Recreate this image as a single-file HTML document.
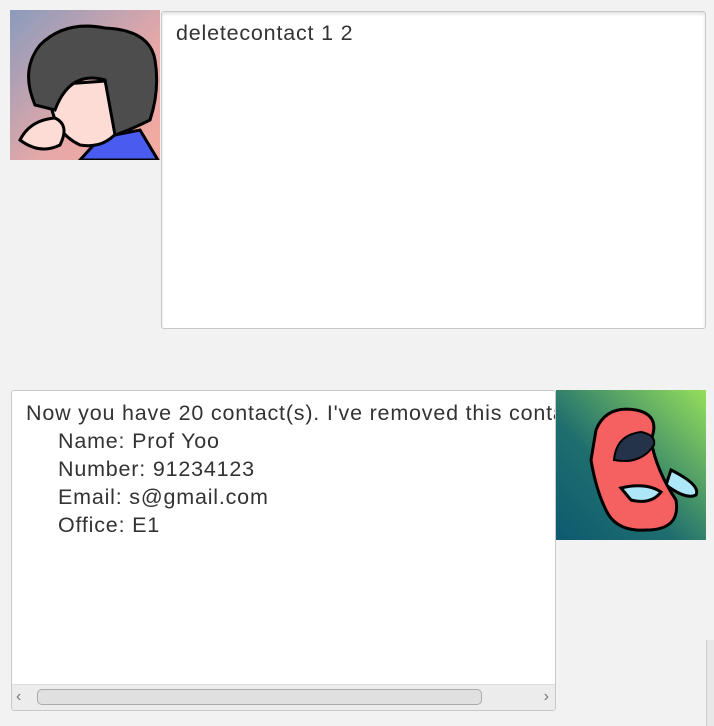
<!DOCTYPE html>
<html><head><style>
body{margin:0;width:714px;height:726px;background:#f2f2f2;position:relative;overflow:hidden;font-family:"Liberation Sans",sans-serif;color:#333;}
.box{position:absolute;background:#fff;border:1px solid #c8c8c8;border-radius:3px;box-sizing:border-box;}
.t{position:absolute;font-size:21.5px;letter-spacing:0.8px;white-space:pre;line-height:28px;}
.i{padding-left:32px}
</style></head><body>
<svg style="position:absolute;left:10px;top:10px" width="150" height="150" viewBox="0 0 150 150">
<defs><linearGradient id="g1" x1="0" y1="0" x2="1" y2="1"><stop offset="0" stop-color="#8a9bbd"/><stop offset="0.6" stop-color="#e6a8a8"/><stop offset="1" stop-color="#f4aaa0"/></linearGradient></defs>
<rect width="150" height="150" fill="url(#g1)"/>
<path d="M70 150 L90 128 L130 120 L148 150Z" fill="#4a5cf0" stroke="#000" stroke-width="3"/>
<path d="M40 75 Q38 120 70 135 Q100 140 115 110 L110 70Z" fill="#fcdcd4" stroke="#000" stroke-width="3"/>
<path d="M25 95 Q10 60 30 35 Q55 10 95 18 Q140 20 145 50 Q150 80 140 110 Q120 120 105 125 L95 70 Q60 60 45 100 Z" fill="#4d4d4d" stroke="#000" stroke-width="3"/>
<path d="M10 130 Q20 110 45 108 Q60 115 50 135 Q30 145 10 130Z" fill="#fcdcd4" stroke="#000" stroke-width="3"/>
</svg>
<div class="box" style="left:161px;top:11px;width:545px;height:318px;box-shadow:inset 0 2px 3px rgba(0,0,0,.12)"></div>
<div class="t" style="left:176px;top:19px">deletecontact 1 2</div>
<div class="box" style="left:11px;top:390px;width:545px;height:321px;overflow:hidden">
<div class="t" style="left:14px;top:8px"><div>Now you have 20 contact(s). I've removed this contact:</div><div class="i">Name: Prof Yoo</div><div class="i">Number: 91234123</div><div class="i">Email: s@gmail.com</div><div class="i">Office: E1</div></div>
<div style="position:absolute;left:0;right:0;bottom:0;height:25px;background:#ececec;border-top:1px solid #ddd"></div>
<div style="position:absolute;left:25px;width:443px;bottom:5px;height:14px;background:#e0e0e0;border:1px solid #aaa;border-radius:5px"></div>
<div style="position:absolute;left:4px;bottom:4px;font-size:16px;color:#777">‹</div>
<div style="position:absolute;right:6px;bottom:4px;font-size:16px;color:#777">›</div>
</div>
<svg style="position:absolute;left:556px;top:390px" width="150" height="150" viewBox="0 0 150 150">
<defs><linearGradient id="g2" x1="1" y1="0" x2="0" y2="1"><stop offset="0" stop-color="#96df5c"/><stop offset="0.6" stop-color="#1f6e6e"/><stop offset="1" stop-color="#0d5a70"/></linearGradient></defs>
<rect width="150" height="150" fill="url(#g2)"/>
<path d="M115 80 Q145 95 140 105 Q130 110 110 95Z" fill="#aee8f8" stroke="#000" stroke-width="3"/>
<path d="M40 40 Q50 15 80 20 Q105 25 95 50 Q100 80 120 110 Q125 140 90 140 Q60 142 50 120 Q40 100 35 70 Z" fill="#f56060" stroke="#000" stroke-width="3"/>
<path d="M58 70 Q60 45 85 42 Q100 45 98 55 Q85 75 58 70Z" fill="#24324a" stroke="#000" stroke-width="2"/>
<path d="M65 98 Q90 92 105 102 Q95 115 75 110Z" fill="#aee8f8" stroke="#000" stroke-width="3"/>
</svg>
<div style="position:absolute;left:706px;top:640px;width:8px;height:86px;background:#e8e8e8;border-left:1px solid #ccc"></div>
</body></html>
